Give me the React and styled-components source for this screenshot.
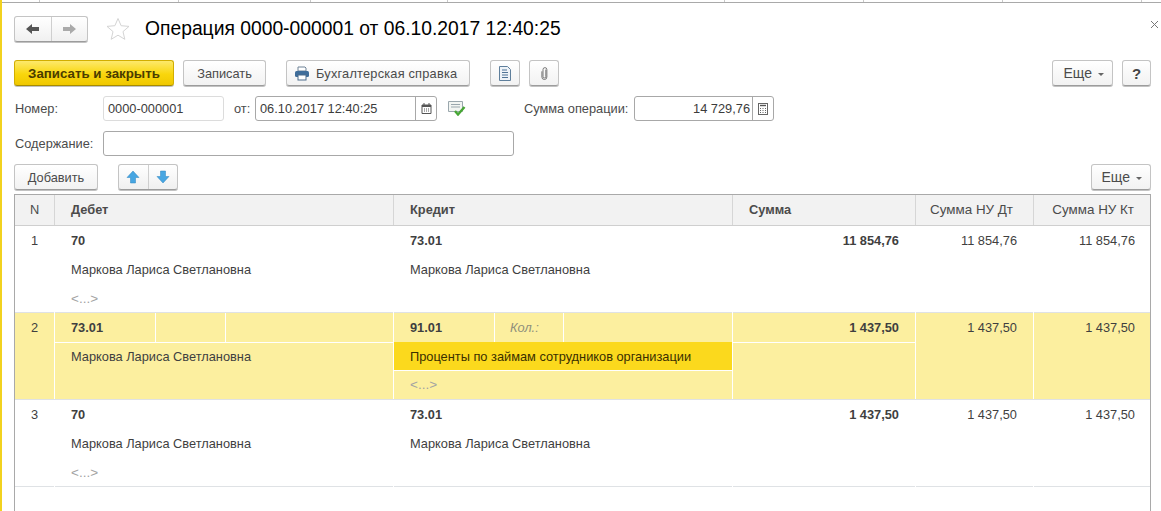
import React from 'react';
import styled, { createGlobalStyle } from 'styled-components';

const GlobalStyle = createGlobalStyle`
  html, body {
    margin: 0;
    padding: 0;
    background: #fff;
    overflow: hidden;
  }
  body {
    font-family: "Liberation Sans", Arial, sans-serif;
    font-size: 12.8px;
    color: #4b4b4b;
  }
`;

const Page = styled.div`
  width: 1161px;
  height: 511px;
  box-sizing: border-box;
  border-left: 2px solid #f2d21f;
  overflow: hidden;
`;

const TopStrip = styled.div`
  height: 2px;
  margin-left: -2px;
  border-bottom: 1px solid #a9a9a9;
  display: flex;
`;

const Tick = styled.span`
  width: 1px;
  height: 2px;
  margin-left: ${({ $gap }) => $gap}px;
  background: #c9c9c9;
`;

const Content = styled.div`
  padding: 13px 10px 0 12px;
  display: flex;
  flex-direction: column;
`;

const TitleBar = styled.div`
  height: 26px;
  display: flex;
  align-items: stretch;
`;

const StarSlot = styled.span`
  margin-left: 18px;
  display: flex;
  align-items: center;
`;

const Title = styled.h1`
  margin: 0 0 0 15px;
  font-size: 19.3px;
  line-height: 26px;
  font-weight: 400;
  color: #000;
  white-space: nowrap;
`;

const CloseMark = styled.button`
  margin-left: auto;
  margin-right: -8px;
  margin-top: 4px;
  padding: 0;
  border: 0;
  align-self: flex-start;
  background: none;
  display: flex;
`;

const Toolbar = styled.div`
  margin-top: ${({ $top }) => $top}px;
  height: 26px;
  display: flex;
  align-items: stretch;
`;

const Button = styled.button`
  box-sizing: border-box;
  width: ${({ $w }) => $w}px;
  margin-left: ${({ $ml }) => $ml || 0}px;
  padding: 0;
  display: flex;
  align-items: center;
  justify-content: center;
  gap: 7px;
  font-family: inherit;
  font-size: 12.8px;
  color: #4b4b4b;
  border: 1px solid #c4c4c4;
  border-bottom-color: #9c9c9c;
  border-radius: 3px;
  background: linear-gradient(#ffffff, #f2f2f2);
  box-shadow: 0 1px 0 #c2c2c2;
  white-space: nowrap;
`;

const PrimaryButton = styled(Button)`
  font-weight: 700;
  font-size: 13.3px;
  color: #4a3c00;
  border-color: #d2ae00;
  border-bottom-color: #a78c00;
  background: linear-gradient(#fde96c, #f9d60c 55%, #f0c800);
`;

const PrintButton = styled(Button)`
  justify-content: flex-start;
  padding-left: 7px;
  gap: 6px;
  letter-spacing: 0.2px;
`;

const MoreButton = styled(Button)`
  justify-content: flex-end;
  padding-right: 8px;
  gap: 6px;
  font-size: 14px;
`;

const Spacer = styled.div`
  flex: 1;
`;

const ButtonGroup = styled.div`
  box-sizing: border-box;
  width: ${({ $w }) => $w}px;
  margin-left: ${({ $ml }) => $ml || 0}px;
  display: flex;
  border: 1px solid #c4c4c4;
  border-bottom-color: #9c9c9c;
  border-radius: 3px;
  background: linear-gradient(#ffffff, #f0f0f0);
  box-shadow: 0 1px 0 #c2c2c2;
`;

const GroupItem = styled.span`
  flex: 1;
  display: flex;
  align-items: center;
  justify-content: center;
  & + & {
    border-left: 1px solid #cfcfcf;
  }
`;

const Caret = styled.span`
  width: 0;
  height: 0;
  margin-top: 2px;
  border-left: 3px solid transparent;
  border-right: 3px solid transparent;
  border-top: 3px solid #666;
`;

const Help = styled(Button)`
  font-size: 15px;
  font-weight: 700;
  color: #444;
`;

const FormRow = styled.div`
  margin-top: ${({ $top }) => $top}px;
  height: ${({ $h }) => $h}px;
  display: flex;
  align-items: center;
`;

const Label = styled.label`
  width: ${({ $w }) => $w}px;
  margin-left: ${({ $ml }) => $ml || 0}px;
  padding-left: ${({ $pad }) => $pad || 0}px;
  box-sizing: border-box;
  flex: none;
  white-space: nowrap;
`;

const Field = styled.div`
  box-sizing: border-box;
  width: ${({ $w }) => $w}px;
  height: 100%;
  display: flex;
  align-items: stretch;
  background: #fff;
  border: 1px solid ${({ $soft }) => ($soft ? '#dcdcdc' : '#a8a8a8')};
  border-radius: 3px;
  color: #3c3c3c;
`;

const FieldValue = styled.span`
  flex: 1;
  padding: 0 ${({ $right }) => ($right ? 2 : 3)}px 0 4px;
  display: flex;
  align-items: center;
  justify-content: ${({ $right }) => ($right ? 'flex-end' : 'flex-start')};
`;

const FieldButton = styled.span`
  width: 20px;
  flex: none;
  display: flex;
  align-items: center;
  justify-content: center;
  border-left: 1px solid #a8a8a8;
`;

const StatusIcon = styled.span`
  margin-left: 11px;
  display: flex;
`;

const Table = styled.div`
  box-sizing: border-box;
  margin-top: 4px;
  height: 330px;
  border: 1px solid #a9a9a9;
  border-bottom: 0;
`;

const COLUMNS = '39px 339px 339px 183px 118px 1fr';

const HeaderRow = styled.div`
  height: 30px;
  display: grid;
  grid-template-columns: ${COLUMNS};
  background: #f2f2f2;
  border-bottom: 1px solid #cfcfcf;
`;

const HeaderCell = styled.div`
  display: flex;
  align-items: center;
  justify-content: ${({ $center }) => ($center ? 'center' : 'flex-start')};
  padding-left: ${({ $center }) => ($center ? 0 : 16)}px;
  padding-bottom: 2px;
  font-weight: ${({ $bold }) => ($bold ? 700 : 400)};
  & + & {
    border-left: 1px solid #d6d6d6;
  }
`;

const NumericHeader = styled(HeaderCell)`
  justify-content: flex-end;
  padding-left: 0;
  padding-right: ${({ $pr }) => $pr}px;
  font-size: 13.4px;
  white-space: nowrap;
`;

const Row = styled.div`
  height: 86px;
  display: grid;
  grid-template-columns: ${COLUMNS};
  background: ${({ $active }) => ($active ? '#fcef9f' : '#fff')};
  border-bottom: 1px solid #dfe2e5;
`;

const Cell = styled.div`
  display: flex;
  flex-direction: column;
  & + & {
    border-left: 1px solid ${({ $active }) => ($active ? '#fff' : 'transparent')};
  }
`;

const Line = styled.div`
  height: 29px;
  box-sizing: border-box;
  display: flex;
  align-items: center;
  justify-content: ${({ $right, $center }) =>
    $right ? 'flex-end' : $center ? 'center' : 'flex-start'};
  padding: ${({ $right, $center, $end }) =>
    $right ? `0 ${$end ? 15 : 16}px 0 0` : $center ? '0' : '0 0 0 16px'};
  padding-bottom: ${({ $rule }) => ($rule ? 2 : 0)}px;
  font-weight: ${({ $bold }) => ($bold ? 700 : 400)};
  color: #3f3f3f;
  border-top: ${({ $rule }) => ($rule ? '1px solid #fff' : '0')};
  white-space: nowrap;
`;

const SelectedLine = styled(Line)`
  height: 28px;
  background: #fbd91d;
  color: #3a2f00;
`;

const SplitLine = styled.div`
  height: 29px;
  display: grid;
  grid-template-columns: ${({ $cols }) => $cols};
`;

const Part = styled.div`
  display: flex;
  align-items: center;
  padding-left: ${({ $pad }) => $pad}px;
  font-weight: ${({ $bold }) => ($bold ? 700 : 400)};
  font-style: ${({ $italic }) => ($italic ? 'italic' : 'normal')};
  color: ${({ $italic }) => ($italic ? '#8f8f7c' : '#3f3f3f')};
  & + & {
    border-left: 1px solid #fff;
  }
`;

const Empty = styled.span`
  color: #a3a3a3;
  font-size: 13.5px;
`;

const BackArrow = () => (
  <svg width="16" height="12" viewBox="0 0 16 12">
    <path d="M1 6l6-5v3h7v4H7v3z" fill="#555" />
  </svg>
);

const ForwardArrow = () => (
  <svg width="16" height="12" viewBox="0 0 16 12">
    <path d="M15 6L9 1v3H2v4h7v3z" fill="#aaa" />
  </svg>
);

const Star = () => (
  <svg width="24" height="24" viewBox="0 0 24 24">
    <path
      d="M12 1.5l3.1 7.2 7.9.7-6 5.2 1.8 7.7L12 18.2l-6.8 4.1L7 14.6 1 9.4l7.9-.7z"
      fill="#fff"
      stroke="#d4d4d4"
    />
  </svg>
);

const Printer = () => (
  <svg width="16" height="15" viewBox="0 0 16 15">
    <path d="M4 1h7l1 1v3H4z" fill="#fff" stroke="#6f8397" />
    <rect x="1" y="5" width="14" height="6" rx="1.5" fill="#3f6d9a" />
    <rect x="4" y="9" width="8" height="5" fill="#fff" stroke="#4c6d8c" />
  </svg>
);

const DocIcon = () => (
  <svg width="12" height="15" viewBox="0 0 12 15">
    <path d="M.5.5h8l3 3v11H.5z" fill="#eef3f8" stroke="#5f7f9c" />
    <path d="M3 4h5M3 6.5h6M3 9h6M3 11.5h6" stroke="#4f7396" />
  </svg>
);

const ClipIcon = () => (
  <svg width="7" height="15" viewBox="0 0 8 15">
    <path
      d="M5.5 3v8a1.6 1.6 0 0 1-3.2 0V3a2.2 2.2 0 0 1 4.4 0v8.5A2.8 2.8 0 0 1 1 11.5V5"
      fill="none"
      stroke="#666"
    />
  </svg>
);

const CalendarIcon = () => (
  <svg width="11" height="11" viewBox="0 0 11 11">
    <path d="M1 2h9v8.5H1z" fill="#fff" stroke="#555" />
    <path d="M1 2h9v2H1z" fill="#555" />
    <path d="M3 0v2M8 0v2" stroke="#555" />
    <path d="M3 6h1M5 6h1M7 6h1M3 8h1M5 8h1M7 8h1" stroke="#555" />
  </svg>
);

const CalculatorIcon = () => (
  <svg width="10" height="12" viewBox="0 0 10 12">
    <rect x=".5" y=".5" width="9" height="11" fill="#fff" stroke="#666" />
    <path d="M2 2.5h6" stroke="#555" strokeWidth="1.4" />
    <path d="M2 5.5h1M4.5 5.5h1M7 5.5h1M2 7.5h1M4.5 7.5h1M7 7.5h1M2 9.5h1M4.5 9.5h1M7 9.5h1" stroke="#666" />
  </svg>
);

const PostedIcon = () => (
  <svg width="18" height="15" viewBox="0 0 18 15">
    <path d="M.5.5h14v10H.5z" fill="#f2f5f2" stroke="#9aa7ad" />
    <path d="M3 3.5h9M3 6h9" stroke="#9aa7ad" />
    <path d="M7 10l3 3.5L16.5 6" fill="none" stroke="#47a635" strokeWidth="2.4" />
  </svg>
);

const UpIcon = () => (
  <svg width="14" height="14" viewBox="0 0 14 14">
    <path d="M7 1l6 6.5H9.5V13h-5V7.5H1z" fill="#47a6e2" stroke="#2e84bf" strokeWidth=".5" />
  </svg>
);

const DownIcon = () => (
  <svg width="14" height="14" viewBox="0 0 14 14">
    <path d="M7 13l6-6.5H9.5V1h-5v5.5H1z" fill="#47a6e2" stroke="#2e84bf" strokeWidth=".5" />
  </svg>
);

const PERSON = 'Маркова Лариса Светлановна';

const PlainRow = ({ n, debit, credit, sum }) => (
  <Row>
    <Cell>
      <Line $center>{n}</Line>
    </Cell>
    <Cell>
      <Line $bold>{debit}</Line>
      <Line>{PERSON}</Line>
      <Line>
        <Empty>&lt;...&gt;</Empty>
      </Line>
    </Cell>
    <Cell>
      <Line $bold>{credit}</Line>
      <Line>{PERSON}</Line>
    </Cell>
    <Cell>
      <Line $bold $right>
        {sum}
      </Line>
    </Cell>
    <Cell>
      <Line $right>{sum}</Line>
    </Cell>
    <Cell>
      <Line $right $end>
        {sum}
      </Line>
    </Cell>
  </Row>
);

const ActiveRow = () => (
  <Row $active>
    <Cell $active>
      <Line $center>2</Line>
    </Cell>
    <Cell $active>
      <SplitLine $cols="100px 70px 1fr">
        <Part $pad={16} $bold>
          73.01
        </Part>
        <Part />
        <Part />
      </SplitLine>
      <Line $rule>{PERSON}</Line>
    </Cell>
    <Cell $active>
      <SplitLine $cols="100px 69px 1fr">
        <Part $pad={16} $bold>
          91.01
        </Part>
        <Part $pad={15} $italic>
          Кол.:
        </Part>
        <Part />
      </SplitLine>
      <SelectedLine>Проценты по займам сотрудников организации</SelectedLine>
      <Line $rule>
        <Empty>&lt;...&gt;</Empty>
      </Line>
    </Cell>
    <Cell $active>
      <Line $bold $right>
        1 437,50
      </Line>
      <Line $rule />
    </Cell>
    <Cell $active>
      <Line $right>1 437,50</Line>
    </Cell>
    <Cell $active>
      <Line $right $end>
        1 437,50
      </Line>
    </Cell>
  </Row>
);

const App = () => (
  <Page>
    <GlobalStyle />
    <TopStrip>
      <Tick $gap={39} />
      <Tick $gap={138} />
      <Tick $gap={131} />
      <Tick $gap={136} />
      <Tick $gap={276} />
      <Tick $gap={138} />
      <Tick $gap={138} />
      <Tick $gap={138} />
    </TopStrip>
    <Content>
      <TitleBar>
        <ButtonGroup $w={74}>
          <GroupItem>
            <BackArrow />
          </GroupItem>
          <GroupItem>
            <ForwardArrow />
          </GroupItem>
        </ButtonGroup>
        <StarSlot>
          <Star />
        </StarSlot>
        <Title>Операция 0000-000001 от 06.10.2017 12:40:25</Title>
        <CloseMark aria-label="Закрыть">
          <svg width="9" height="9" viewBox="0 0 9 9">
            <path d="M1 1l7 7M8 1L1 8" stroke="#777" />
          </svg>
        </CloseMark>
      </TitleBar>

      <Toolbar $top={18}>
        <PrimaryButton $w={160}>Записать и закрыть</PrimaryButton>
        <Button $w={83} $ml={9}>
          Записать
        </Button>
        <PrintButton $w={184} $ml={20}>
          <Printer />
          Бухгалтерская справка
        </PrintButton>
        <Button $w={30} $ml={20}>
          <DocIcon />
        </Button>
        <Button $w={30} $ml={9}>
          <ClipIcon />
        </Button>
        <Spacer />
        <MoreButton $w={61}>
          Еще <Caret />
        </MoreButton>
        <Help $w={29} $ml={9}>
          ?
        </Help>
      </Toolbar>

      <FormRow $top={10} $h={25}>
        <Label $w={89} $pad={1}>
          Номер:
        </Label>
        <Field $w={121} $soft>
          <FieldValue>0000-000001</FieldValue>
        </Field>
        <Label $w={21} $ml={10}>
          от:
        </Label>
        <Field $w={182}>
          <FieldValue>06.10.2017 12:40:25</FieldValue>
          <FieldButton>
            <CalendarIcon />
          </FieldButton>
        </Field>
        <StatusIcon>
          <PostedIcon />
        </StatusIcon>
        <Label $w={110} $ml={58}>
          Сумма операции:
        </Label>
        <Field $w={140}>
          <FieldValue $right>14 729,76</FieldValue>
          <FieldButton>
            <CalculatorIcon />
          </FieldButton>
        </Field>
      </FormRow>

      <FormRow $top={10} $h={25}>
        <Label $w={89} $pad={1}>
          Содержание:
        </Label>
        <Field $w={411} />
      </FormRow>

      <Toolbar $top={8}>
        <Button $w={84}>Добавить</Button>
        <ButtonGroup $w={60} $ml={20}>
          <GroupItem>
            <UpIcon />
          </GroupItem>
          <GroupItem>
            <DownIcon />
          </GroupItem>
        </ButtonGroup>
        <Spacer />
        <MoreButton $w={60}>
          Еще <Caret />
        </MoreButton>
      </Toolbar>

      <Table>
        <HeaderRow>
          <HeaderCell $center>N</HeaderCell>
          <HeaderCell $bold>Дебет</HeaderCell>
          <HeaderCell $bold>Кредит</HeaderCell>
          <HeaderCell $bold>Сумма</HeaderCell>
          <NumericHeader $pr={20}>Сумма НУ Дт</NumericHeader>
          <NumericHeader $pr={16}>Сумма НУ Кт</NumericHeader>
        </HeaderRow>
        <PlainRow n="1" debit="70" credit="73.01" sum="11 854,76" />
        <ActiveRow />
        <PlainRow n="3" debit="70" credit="73.01" sum="1 437,50" />
      </Table>
    </Content>
  </Page>
);

export default App;
